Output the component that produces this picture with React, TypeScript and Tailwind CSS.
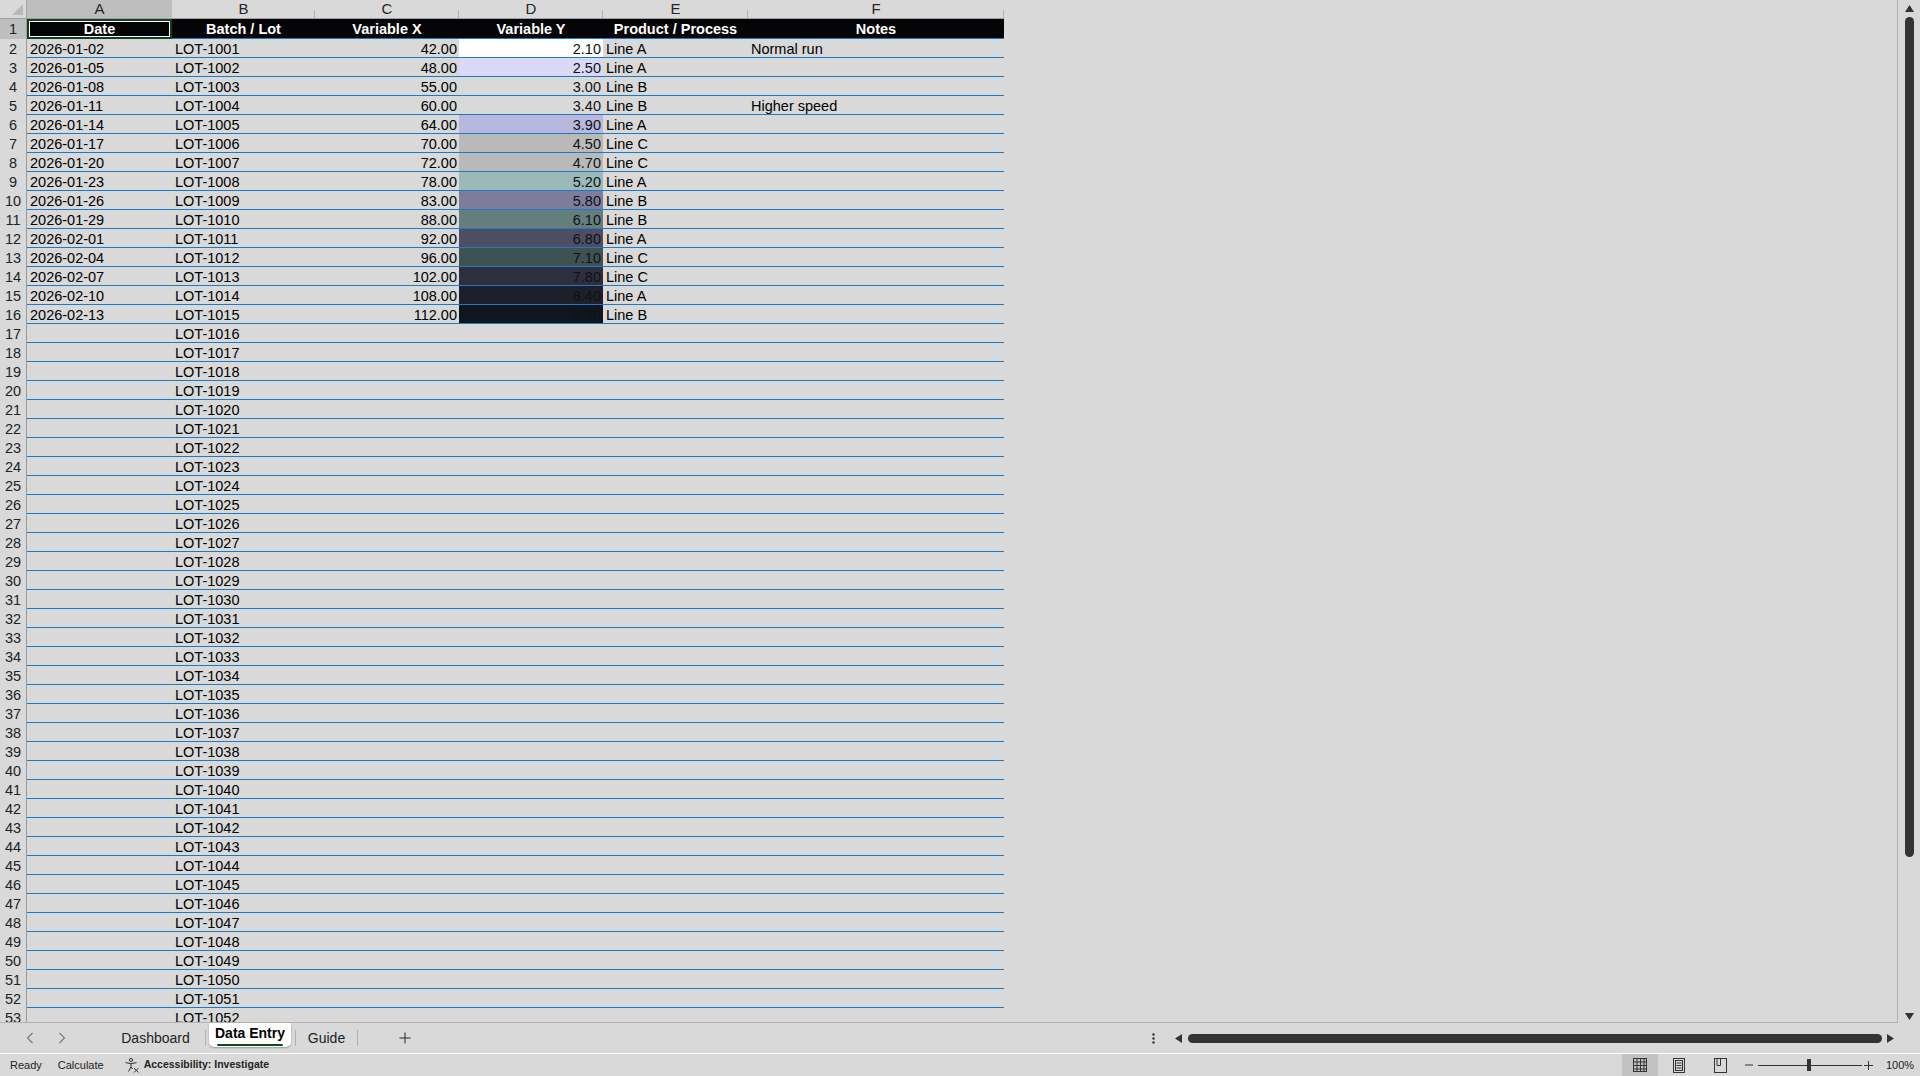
import React from "react";

type Row = {
  a?: string;
  b: string;
  c?: string;
  d?: string;
  e?: string;
  f?: string;
  fill?: string;
};

const data: Row[] = [
  { a: "2026-01-02", b: "LOT-1001", c: "42.00", d: "2.10", e: "Line A", f: "Normal run", fill: "bg-[#ffffff]" },
  { a: "2026-01-05", b: "LOT-1002", c: "48.00", d: "2.50", e: "Line A", fill: "bg-[#d9d9f7]" },
  { a: "2026-01-08", b: "LOT-1003", c: "55.00", d: "3.00", e: "Line B" },
  { a: "2026-01-11", b: "LOT-1004", c: "60.00", d: "3.40", e: "Line B", f: "Higher speed" },
  { a: "2026-01-14", b: "LOT-1005", c: "64.00", d: "3.90", e: "Line A", fill: "bg-[#b8b8de]" },
  { a: "2026-01-17", b: "LOT-1006", c: "70.00", d: "4.50", e: "Line C", fill: "bg-[#b9b9b9]" },
  { a: "2026-01-20", b: "LOT-1007", c: "72.00", d: "4.70", e: "Line C", fill: "bg-[#b9b9b9]" },
  { a: "2026-01-23", b: "LOT-1008", c: "78.00", d: "5.20", e: "Line A", fill: "bg-[#9bb9b9]" },
  { a: "2026-01-26", b: "LOT-1009", c: "83.00", d: "5.80", e: "Line B", fill: "bg-[#7d7c9a]" },
  { a: "2026-01-29", b: "LOT-1010", c: "88.00", d: "6.10", e: "Line B", fill: "bg-[#647e7e]" },
  { a: "2026-02-01", b: "LOT-1011", c: "92.00", d: "6.80", e: "Line A", fill: "bg-[#4d4d64]" },
  { a: "2026-02-04", b: "LOT-1012", c: "96.00", d: "7.10", e: "Line C", fill: "bg-[#3f5252]" },
  { a: "2026-02-07", b: "LOT-1013", c: "102.00", d: "7.80", e: "Line C", fill: "bg-[#2e2e3e]" },
  { a: "2026-02-10", b: "LOT-1014", c: "108.00", d: "8.40", e: "Line A", fill: "bg-[#1f1f2b]" },
  { a: "2026-02-13", b: "LOT-1015", c: "112.00", d: "8.90", e: "Line B", fill: "bg-[#10161f]" },
];
for (let n = 17; n <= 53; n++) {
  data.push({ b: `LOT-${1000 + n - 1}` });
}

const COLS = "grid w-[1004px] grid-cols-[27px_145px_143px_144px_144px_145px_256px]";
const CELL = "border-b border-[#1f7ac4] px-[3px] whitespace-nowrap overflow-hidden leading-[20px]";

function HeaderCell({ label, selected }: { label: string; selected?: boolean }) {
  return (
    <div
      className={`relative flex items-center justify-center text-[15px] text-[#262626] leading-[18px] ${
        selected ? "bg-[#bebebe]" : "bg-[#d9d9d9]"
      }`}
    >
      {label}
      {!selected && <span className="absolute right-0 bottom-0 h-[8px] w-px bg-[#b3b3b3]" />}
    </div>
  );
}

function Tri({ dir, className }: { dir: "up" | "down" | "left" | "right"; className?: string }) {
  const pts =
    dir === "up"
      ? "0,7 4.5,0 9,7"
      : dir === "down"
      ? "0,0 9,0 4.5,7"
      : dir === "left"
      ? "7,0 7,9 0,4.5"
      : "0,0 7,4.5 0,9";
  const w = dir === "up" || dir === "down" ? 9 : 7;
  const h = dir === "up" || dir === "down" ? 7 : 9;
  return (
    <svg width={w} height={h} viewBox={`0 0 ${w} ${h}`} className={className}>
      <polygon points={pts} fill="#333" />
    </svg>
  );
}

export default function App() {
  return (
    <div className="w-[1920px] h-[1076px] bg-[#d9d9d9] overflow-hidden flex flex-col text-black font-['Liberation_Sans',Arial,sans-serif]">
      {/* Sheet area */}
      <div className="flex h-[1023px] shrink-0">
        <div className="w-[1898px] h-[1023px] border-r border-b border-[#b3b3b3] overflow-hidden">
          {/* Column headers */}
          <div className={`${COLS} h-[19px] border-b border-[#a0a0a0]`}>
            <div className="relative bg-[#d9d9d9] border-r border-[#a8a8a8]">
              <svg width="11" height="11" viewBox="0 0 11 11" className="absolute right-[3px] bottom-[3px]">
                <polygon points="11,0 11,11 0,11" fill="#b9b9b9" />
              </svg>
            </div>
            <HeaderCell label="A" selected />
            <HeaderCell label="B" />
            <HeaderCell label="C" />
            <HeaderCell label="D" />
            <HeaderCell label="E" />
            <HeaderCell label="F" />
          </div>

          {/* Row 1 header row */}
          <div className={`${COLS} h-[20px]`}>
            <div className="bg-[#bebebe] border-r border-[#9a9a9a] flex items-center justify-center text-[14.5px] text-[#222] leading-[20px]">
              1
            </div>
            <div className="bg-[#050507] border-2 border-[#123f20] shadow-[inset_0_0_0_1px_#ffffff] flex items-center justify-center text-white font-bold text-[14.5px] leading-[16px]">
              Date
            </div>
            {["Batch / Lot", "Variable X", "Variable Y", "Product / Process", "Notes"].map((h) => (
              <div
                key={h}
                className={`${CELL} bg-[#050507] text-white font-bold text-[14.5px] text-center flex items-center justify-center`}
              >
                {h}
              </div>
            ))}
          </div>

          {/* Data rows */}
          {data.map((r, i) => (
            <div key={i} className={`${COLS} h-[19px]`}>
              <div className="border-r border-[#9a9a9a] overflow-hidden text-center text-[14.5px] text-[#222] leading-[20px]">
                {i + 2}
              </div>
              <div className={`${CELL} text-[14.5px] text-left`}>{r.a}</div>
              <div className={`${CELL} text-[14.5px] text-left`}>{r.b}</div>
              <div className={`${CELL} text-[14.5px] text-right pr-[2px]`}>{r.c}</div>
              <div className={`${CELL} text-[14.5px] text-right pr-[2px] text-[#111] ${r.fill ?? ""}`}>{r.d}</div>
              <div className={`${CELL} text-[14.5px] text-left`}>{r.e}</div>
              <div className={`${CELL} text-[14.5px] text-left`}>{r.f}</div>
            </div>
          ))}
        </div>

        {/* Vertical scrollbar */}
        <div className="w-[22px] h-[1023px] flex flex-col items-center pt-[5px] pb-[3px]">
          <Tri dir="up" />
          <div className="mt-[5px] h-[840px] w-[9px] rounded-full bg-[#333]" />
          <div className="flex-1" />
          <Tri dir="down" />
        </div>
      </div>

      {/* Tab bar */}
      <div className="h-[30px] shrink-0 flex items-center">
        <div className="w-[14px]" />
        <div className="w-[32px] flex justify-center">
          <svg width="8" height="12" viewBox="0 0 8 12">
            <polyline points="6.5,1 1.5,6 6.5,11" fill="none" stroke="#7a7a7a" strokeWidth="1.2" />
          </svg>
        </div>
        <div className="w-[32px] flex justify-center">
          <svg width="8" height="12" viewBox="0 0 8 12">
            <polyline points="1.5,1 6.5,6 1.5,11" fill="none" stroke="#7a7a7a" strokeWidth="1.2" />
          </svg>
        </div>
        <div className="w-[28px]" />
        <div className="w-[99px] text-center text-[14px] text-[#222]">Dashboard</div>
        <div className="w-px h-[16px] bg-[#b0b0b0]" />
        <div className="w-[3px]" />
        <div className="self-start h-[24px] w-[82px] bg-white rounded-b-[5px] shadow-[0_1px_2px_rgba(0,0,0,0.3)] flex flex-col items-center justify-center">
          <div className="text-[14px] font-bold text-black leading-[16px] mt-[1px]">Data Entry</div>
          <div className="mt-[3px] h-[2px] w-[66px] bg-[#0f4a20] rounded-full" />
        </div>
        <div className="w-[4px]" />
        <div className="w-px h-[16px] bg-[#b0b0b0]" />
        <div className="w-[61px] text-center text-[14px] text-[#222]">Guide</div>
        <div className="w-px h-[16px] bg-[#b0b0b0]" />
        <div className="w-[94px] flex justify-center">
          <svg width="12" height="12" viewBox="0 0 12 12">
            <line x1="6" y1="0.5" x2="6" y2="11.5" stroke="#333" strokeWidth="1.1" />
            <line x1="0.5" y1="6" x2="11.5" y2="6" stroke="#333" strokeWidth="1.1" />
          </svg>
        </div>

        <div className="ml-auto w-[775px] flex items-center">
          <div className="w-[16px] flex justify-center">
            <svg width="3" height="11" viewBox="0 0 3 11">
              <circle cx="1.5" cy="1.5" r="1.2" fill="#333" />
              <circle cx="1.5" cy="5.5" r="1.2" fill="#333" />
              <circle cx="1.5" cy="9.5" r="1.2" fill="#333" />
            </svg>
          </div>
          <div className="w-[14px]" />
          <Tri dir="left" />
          <div className="ml-[6px] w-[694px] h-[9px] rounded-full bg-[#333]" />
          <div className="w-[5px]" />
          <Tri dir="right" />
        </div>
      </div>

      {/* Status bar */}
      <div className="h-[23px] shrink-0 border-t border-white flex items-center text-[11px] text-[#222]">
        <div className="pl-[10px]">Ready</div>
        <div className="ml-[16px]">Calculate</div>
        <svg width="16" height="15" viewBox="0 0 16 15" className="ml-[20px]">
          <circle cx="7" cy="2" r="1.6" fill="none" stroke="#333" strokeWidth="1" />
          <path d="M1.5 4.5 L7 5.8 L12.5 4.5" fill="none" stroke="#333" strokeWidth="1" />
          <path d="M7 5.8 L7 9 L4.5 13.5 M7 9 L8.5 11" fill="none" stroke="#333" strokeWidth="1" />
          <path d="M10 10 L14.5 14.5 M14.5 10 L10 14.5" fill="none" stroke="#333" strokeWidth="1" />
        </svg>
        <div className="ml-[4px] font-bold text-[10.5px]">Accessibility: Investigate</div>

        <div className="ml-auto h-full flex items-center">
          <div className="w-[36px] h-full bg-[#c2c2c2] flex items-center justify-center">
            <svg width="14" height="14" viewBox="0 0 14 14">
              <rect x="0.5" y="0.5" width="13" height="13" fill="none" stroke="#333" strokeWidth="1" />
              <line x1="4" y1="0.5" x2="4" y2="13.5" stroke="#333" strokeWidth="1" />
              <line x1="7.5" y1="0.5" x2="7.5" y2="13.5" stroke="#333" strokeWidth="1" />
              <line x1="11" y1="0.5" x2="11" y2="13.5" stroke="#333" strokeWidth="1" />
              <line x1="0.5" y1="4" x2="13.5" y2="4" stroke="#333" strokeWidth="1" />
              <line x1="0.5" y1="7.5" x2="13.5" y2="7.5" stroke="#333" strokeWidth="1" />
              <line x1="0.5" y1="11" x2="13.5" y2="11" stroke="#333" strokeWidth="1" />
            </svg>
          </div>
          <div className="w-[42px] h-full flex items-center justify-center">
            <svg width="12" height="15" viewBox="0 0 12 15">
              <rect x="0.5" y="0.5" width="11" height="14" fill="none" stroke="#333" strokeWidth="1" />
              <rect x="2.5" y="2.5" width="7" height="10" fill="none" stroke="#333" strokeWidth="1" />
              <line x1="3.5" y1="5" x2="8.5" y2="5" stroke="#333" strokeWidth="1" />
              <line x1="3.5" y1="7.5" x2="8.5" y2="7.5" stroke="#333" strokeWidth="1" />
              <line x1="3.5" y1="10" x2="8.5" y2="10" stroke="#333" strokeWidth="1" />
            </svg>
          </div>
          <div className="w-[40px] h-full flex items-center justify-center">
            <svg width="13" height="15" viewBox="0 0 13 15">
              <rect x="0.5" y="0.5" width="12" height="14" fill="none" stroke="#333" strokeWidth="1" />
              <path d="M3 0.5 L3 7.5 L6.5 7.5 L6.5 0.5" fill="none" stroke="#333" strokeWidth="1" />
            </svg>
          </div>
          <div className="w-[18px] flex justify-center">
            <svg width="8" height="2" viewBox="0 0 8 2">
              <line x1="0" y1="1" x2="8" y2="1" stroke="#333" strokeWidth="1" />
            </svg>
          </div>
          <div className="w-[104px] h-[12px] flex items-center">
            <div className="w-[49px] h-px bg-[#333]" />
            <div className="w-[4px] h-[12px] bg-[#333]" />
            <div className="w-[51px] h-px bg-[#333]" />
          </div>
          <div className="w-[12px] flex justify-center">
            <svg width="9" height="9" viewBox="0 0 9 9">
              <line x1="4.5" y1="0" x2="4.5" y2="9" stroke="#333" strokeWidth="1" />
              <line x1="0" y1="4.5" x2="9" y2="4.5" stroke="#333" strokeWidth="1" />
            </svg>
          </div>
          <div className="w-[12px]" />
          <div className="w-[29px] text-[11px] whitespace-nowrap">100%</div>
          <div className="w-[5px]" />
        </div>
      </div>
    </div>
  );
}
